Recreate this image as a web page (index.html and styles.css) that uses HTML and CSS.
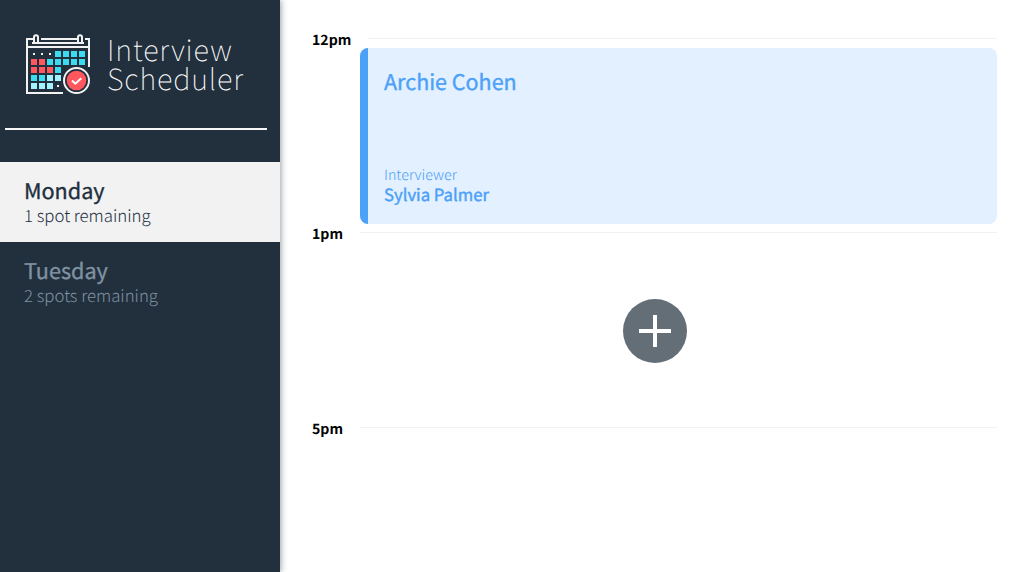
FILE: index.html
```html
<!DOCTYPE html>
<html lang="en">
<head>
<meta charset="utf-8">
<title>Interview Scheduler</title>
<link rel="stylesheet" href="styles.css">
</head>
<body>
<main class="layout">
  <section class="sidebar">
    <div class="brand">
      <svg class="brand-icon" width="66" height="64" viewBox="0 0 66 64">
        <g fill="none" stroke="#f2f2f2" stroke-width="2">
          <path d="M8 7H1V61H37M15 7H51M59 7H63V35M1 15H63"/>
          <path d="M6 11H58M8 11V5.300a2 2 0 0 1 4 0V11M52 11V5.300a2 2 0 0 1 4 0V11"/>
        </g>
        <path fill="#f2f2f2" d="M7 21h2v2h-2zM15 21h2v2h-2zM23 21h2v2h-2zM31 53h2v2h-2z"/>
        <path fill="#3ddbf0" d="M29 19h6v6h-6zM37 19h6v6h-6zM45 19h6v6h-6zM53 19h6v6h-6zM21 27h6v6h-6zM29 27h6v6h-6zM37 27h6v6h-6zM45 27h6v6h-6zM53 27h6v6h-6zM29 35h6v6h-6zM5 43h6v6h-6zM13 43h6v6h-6z"/>
        <path fill="#ff575d" d="M5 27h6v6h-6zM13 27h6v6h-6zM5 35h6v6h-6zM13 35h6v6h-6zM21 35h6v6h-6z"/>
        <path fill="#a2f3ff" d="M21 43h6v6h-6zM29 43h6v6h-6zM5 51h6v6h-6zM13 51h6v6h-6zM21 51h6v6h-6z"/>
        <circle cx="50.500" cy="48.500" r="12.500" fill="#222f3e" stroke="#f2f2f2" stroke-width="2"/>
        <circle cx="50.500" cy="48.500" r="9.800" fill="#ff575d"/>
        <path d="M46 48.500l3.300 3.200 6-5.400" fill="none" stroke="#fff" stroke-width="2"/>
      </svg>
      <h1 class="brand-name"><span class="brand-first">Interview</span><span class="brand-second">Scheduler</span></h1>
    </div>
    <hr class="separator">
    <ul class="days">
      <li class="day day-selected"><h2 class="day-name">Monday</h2><p class="day-spots">1 spot remaining</p></li>
      <li class="day"><h2 class="day-name">Tuesday</h2><p class="day-spots">2 spots remaining</p></li>
    </ul>
  </section>
  <section class="schedule">
    <article class="appointment">
      <header class="time time-first"><h4 class="hour">12pm</h4><hr class="rule"></header>
      <div class="card">
        <h2 class="student">Archie Cohen</h2>
        <div class="interviewer"><h4 class="label">Interviewer</h4><h3 class="name">Sylvia Palmer</h3></div>
      </div>
    </article>
    <article class="appointment appointment-empty">
      <header class="time"><h4 class="hour">1pm</h4><hr class="rule"></header>
      <div class="empty">
        <svg width="64" height="64" viewBox="0 0 64 64"><circle cx="32" cy="32" r="32" fill="#646e77"/><path d="M32 16V48M16 32H48" stroke="#fff" stroke-width="4"/></svg>
      </div>
    </article>
    <article class="appointment">
      <header class="time"><h4 class="hour">5pm</h4><hr class="rule"></header>
    </article>
  </section>
</main>
</body>
</html>
```
FILE: styles.css
```css
* { box-sizing: border-box; margin: 0; padding: 0; }
body { font-family: "Noto Sans CJK SC", "Noto Sans", sans-serif; background: #fff; overflow: hidden; text-rendering: geometricPrecision; }
.layout { display: flex; height: 572px; }
.sidebar { width: 280px; flex: none; background: #222f3d; box-shadow: 1px 0 6px rgba(34, 47, 62, .45); }
.brand { display: flex; height: 128px; padding: 32px 0 0 26px; }
.brand-icon { flex: none; }
.brand-name { display: flex; flex-direction: column; margin: 3px 0 0 15px; font-size: 29px; line-height: 29px; font-weight: 100; letter-spacing: .85px; color: #fff; white-space: nowrap; }
.separator { border: 0; width: 262px; height: 2px; margin: 0 0 32px 5px; background: #f7f7f7; }
.days { list-style: none; }
.day { height: 80px; padding: 16px 24px; color: #7f92a2; white-space: nowrap; }
.day-selected { background: #f2f2f2; color: #222f3e; }
.day-name { font-size: 21.600px; line-height: 26px; font-weight: 400; -webkit-text-stroke: .35px; }
.day-spots { font-size: 16.800px; line-height: 24px; margin-top: -1px; font-weight: 300; }
.schedule { flex: 1; padding: 29px 32px 0; }
.time { display: flex; align-items: center; height: 18px; }
.hour { width: 48px; flex: none; font-size: 14.100px; line-height: 20px; font-weight: 700; color: #000; padding-top: 4px; }
.rule { flex: 1; border: 0; height: 1px; background: #f2f2f2; }
.time-first .rule { margin-left: 8px; }
.card { display: flex; flex-direction: column; justify-content: space-between; height: 176px; margin: 1px 0 0 48px; padding: 18px 16px 20px; border-left: 8px solid #4ba0f8; border-radius: 8px; background: #e3f0ff; color: #4ba0f8; }
.student { font-size: 21.500px; line-height: 32px; font-weight: 400; -webkit-text-stroke: .35px; }
.label { font-size: 14.300px; line-height: 20px; margin-bottom: -1px; font-weight: 300; }
.name { font-size: 16.700px; line-height: 20px; font-weight: 400; -webkit-text-stroke: .4px; }
.appointment-empty { margin-top: -1px; }
.empty { display: flex; align-items: center; justify-content: center; height: 177px; padding-top: 2px; }
```
